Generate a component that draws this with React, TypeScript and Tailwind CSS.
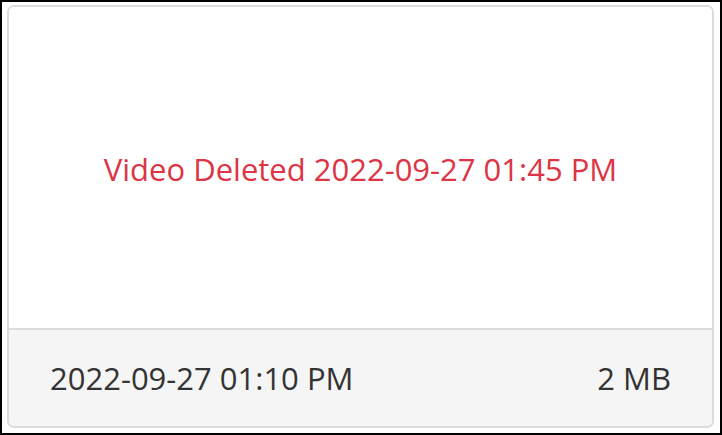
export default function App() {
  return (
    <div className="h-[435px] w-[722px] border-2 border-black bg-white pl-[5px] pt-[3px] font-['Open_Sans',sans-serif]">
      <div className="flex h-[423px] w-[707px] flex-col overflow-hidden rounded-[7px] border-2 border-[#dcdcdc]">
        <div className="flex flex-1 items-center justify-center bg-white pt-[3px]">
          <p className="text-[31px] leading-none text-[#dc3545]">
            Video Deleted 2022-09-27 01:45 PM
          </p>
        </div>
        <div className="flex h-[98px] items-center justify-between border-t-2 border-[#dcdcdc] bg-[#f5f5f5] px-[41px] text-[31px] text-[#333333]">
          <span>2022-09-27 01:10 PM</span>
          <span>2 MB</span>
        </div>
      </div>
    </div>
  );
}
